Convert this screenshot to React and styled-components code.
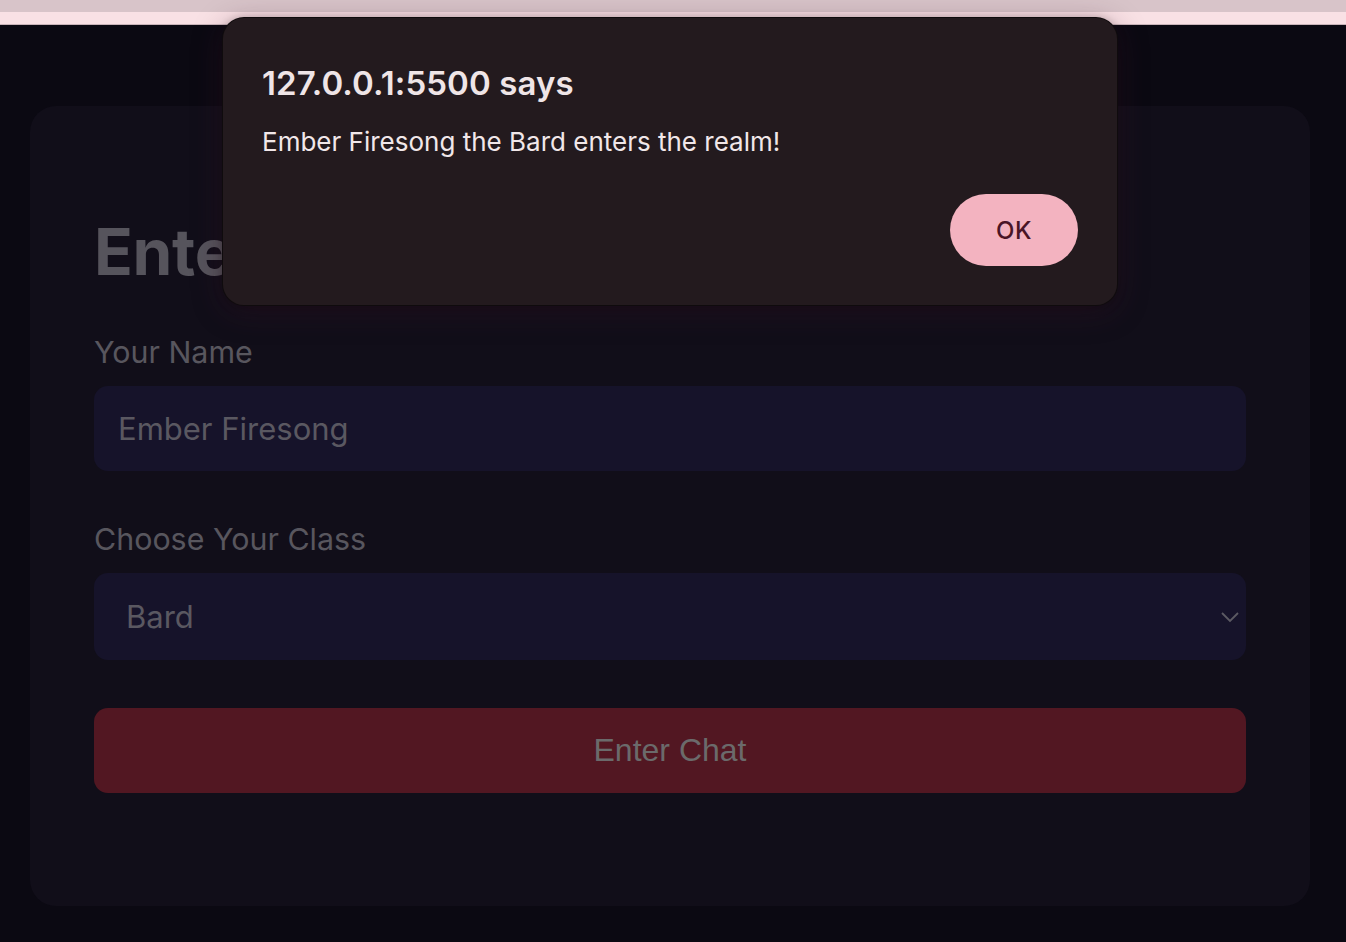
import React from "react";
import styled, { createGlobalStyle } from "styled-components";

const Global = createGlobalStyle`
  html, body { margin: 0; padding: 0; }
  body {
    background: #0b0912;
    font-family: Inter, "Noto Sans", "Liberation Sans", sans-serif;
    overflow: hidden;
  }
  #root { min-height: 942px; }
`;

const Viewport = styled.div`
  position: relative;
  width: 1346px;
  height: 942px;
  display: flex;
  flex-direction: column;
  background: #0b0912;
  overflow: hidden;
`;

const ChromeStrip = styled.div`
  height: 12px;
  background: ${(p) => p.$tone};
  flex: none;
`;

const ChromeEdge = styled.div`
  height: 1px;
  background: #c9b4b9;
  flex: none;
`;

const Page = styled.main`
  flex: 1;
  padding: 81px 36px 0 30px;
  display: flex;
  flex-direction: column;
`;

const Card = styled.section`
  width: 1280px;
  height: 800px;
  box-sizing: border-box;
  background: #110e19;
  border-radius: 26px;
  padding: 107px 64px 0 64px;
  display: flex;
  flex-direction: column;
`;

const Title = styled.h1`
  margin: 0 0 42px 0;
  font-size: 64px;
  line-height: 78px;
  font-weight: 700;
  color: #56545c;
  letter-spacing: -0.3px;
`;

const Field = styled.div`
  display: flex;
  flex-direction: column;
  gap: 15px;
  margin-bottom: ${(p) => p.$gap}px;
`;

const Label = styled.label`
  font-size: 30.4px;
  line-height: 38px;
  color: #58565e;
  font-weight: 400;
`;

const Box = styled.div`
  height: ${(p) => p.$h}px;
  box-sizing: border-box;
  background: #16132a;
  border-radius: 14px;
  display: flex;
  align-items: center;
  justify-content: space-between;
  padding: 0 6px 0 ${(p) => p.$pl}px;
  font-size: 31px;
  color: #5a5861;
`;

const Chevron = styled.svg`
  width: 20px;
  height: 12px;
  flex: none;
`;

const Submit = styled.button`
  height: 85px;
  border: none;
  border-radius: 14px;
  background: #521722;
  color: #6b6a6b;
  font-family: "Liberation Sans", Arial, sans-serif;
  font-size: 32px;
  padding: 0;
  margin-top: 0;
`;

const Dialog = styled.div`
  position: absolute;
  left: 222px;
  top: 17px;
  width: 896px;
  height: 289px;
  box-sizing: border-box;
  background: #231a1e;
  border: 1px solid rgba(0, 0, 0, 0.55);
  border-radius: 22px;
  box-shadow: 0 6px 30px rgba(60, 20, 40, 0.35), 0 2px 8px rgba(0, 0, 0, 0.3);
  padding: 45px 39px 0 39px;
  display: flex;
  flex-direction: column;
`;

const DialogTitle = styled.h2`
  margin: 0;
  font-size: 33px;
  line-height: 40px;
  font-weight: 600;
  color: #efe5e7;
  letter-spacing: 0.1px;
`;

const DialogText = styled.p`
  margin: 23px 0 0 0;
  font-size: 26px;
  line-height: 32px;
  color: #f1e7e9;
`;

const Actions = styled.div`
  display: flex;
  justify-content: flex-end;
  margin-top: 36px;
`;

const OkButton = styled.button`
  width: 128px;
  height: 72px;
  border: none;
  border-radius: 36px;
  background: #f3b3c0;
  color: #4a1526;
  font-family: Inter, "Noto Sans", sans-serif;
  font-size: 24px;
  font-weight: 500;
  letter-spacing: 0.5px;
`;

export default function App() {
  return (
    <Viewport>
      <Global />
      <ChromeStrip $tone="#d8c4c9" />
      <ChromeStrip $tone="#f9e1e5" />
      <ChromeEdge />
      <Page>
        <Card>
          <Title>Enter the Realm</Title>
          <Field $gap={49}>
            <Label>Your Name</Label>
            <Box $h={85} $pl={24}>Ember Firesong</Box>
          </Field>
          <Field $gap={48}>
            <Label>Choose Your Class</Label>
            <Box $h={87} $pl={32}>
              <span>Bard</span>
              <Chevron viewBox="0 0 20 12">
                <path d="M2 2 L10 10 L18 2" fill="none" stroke="#5c5a63" strokeWidth="1.8" />
              </Chevron>
            </Box>
          </Field>
          <Submit>Enter Chat</Submit>
        </Card>
      </Page>
      <Dialog role="alertdialog">
        <DialogTitle>127.0.0.1:5500 says</DialogTitle>
        <DialogText>Ember Firesong the Bard enters the realm!</DialogText>
        <Actions>
          <OkButton>OK</OkButton>
        </Actions>
      </Dialog>
    </Viewport>
  );
}
